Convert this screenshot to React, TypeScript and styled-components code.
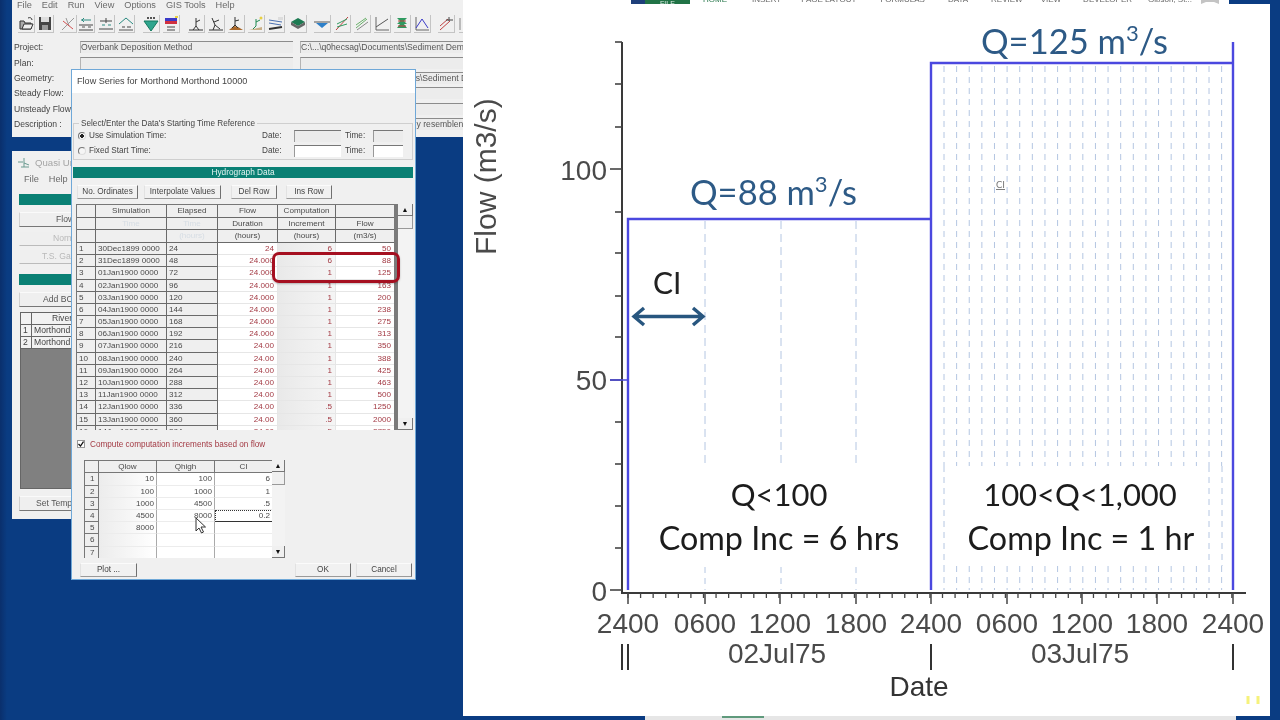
import React from 'react';
import styled, { createGlobalStyle } from 'styled-components';

const Global = createGlobalStyle`
  html, body { margin: 0; padding: 0; background: #0a3c82; }
  * { box-sizing: border-box; }
`;

const Desktop = styled.div`
  position: relative;
  width: 1280px;
  height: 720px;
  overflow: hidden;
  background: linear-gradient(90deg, #0a2f6c 0, #0a3c82 7px);
  font-family: "Liberation Sans", Arial, sans-serif;
  filter: blur(0.5px);
`;

/* ---------- HEC-RAS main window ---------- */
const MainWindow = styled.section`
  position: absolute;
  left: 12px;
  top: 0;
  width: 451px;
  height: 137px;
  background: #f0f0f0;
  color: #444;
  font-size: 8.6px;
  overflow: hidden;
`;
const MenuBar = styled.nav<{ $gap?: number }>`
  display: flex;
  gap: ${p => p.$gap ?? 10}px;
  padding-left: 5px;
  height: 11px;
  font-size: 9.2px;
  line-height: 10px;
  color: #6a6a6a;
`;
const Toolbar = styled.div`
  display: flex;
  align-items: center;
  height: 18px;
  margin-top: 4px;
  padding-left: 6px;
`;
const ToolBtn = styled.span<{ $ml: number }>`
  display: block;
  width: 17px;
  height: 18px;
  margin-left: ${p => p.$ml}px;
  border-right: 1px solid #c4c4c4;
  border-bottom: 1px solid #c4c4c4;
  svg { display: block; }
`;
const FormGrid = styled.div`
  display: grid;
  grid-template-columns: 68px 213px 7px 163px;
  grid-auto-rows: 15.4px;
  margin-top: 6.5px;
`;
const FormLabel = styled.div`
  padding-left: 2px;
  align-self: center;
  white-space: nowrap;
  color: #444;
`;
const Field = styled.div<{ $wide?: boolean; $indent?: number }>`
  grid-column: ${p => (p.$wide ? '2 / span 3' : 'auto')};
  height: 12px;
  align-self: center;
  background: #ececec;
  border-top: 1px solid #8c8c8c;
  border-left: 1px solid #b4b4b4;
  line-height: 10px;
  white-space: nowrap;
  overflow: hidden;
  padding-left: ${p => p.$indent ?? 0}px;
  color: #555;
`;
const Gap = styled.div``;

/* ---------- Quasi Unsteady window ---------- */
const QuasiWindow = styled.section`
  position: absolute;
  left: 12px;
  top: 151px;
  width: 380px;
  height: 368px;
  background: #f0f0f0;
  padding: 0 7px;
  font-size: 8.6px;
  color: #555;
`;
const QuasiTitle = styled.header`
  display: flex;
  align-items: center;
  gap: 5px;
  height: 23px;
  margin-left: -1px;
  font-size: 9.6px;
  color: #a5a5a5;
  svg { display: block; }
`;
const TealBar = styled.div<{ $h?: number; $mt?: number }>`
  height: ${p => p.$h ?? 11}px;
  margin-top: ${p => p.$mt ?? 0}px;
  background: #0a8074;
  color: #e4f4f2;
  font-size: 8.3px;
  line-height: 11px;
  text-align: center;
`;
const QuasiButton = styled.div<{ $pad: number; $dim?: boolean; $mt: number }>`
  height: 15px;
  margin-top: ${p => p.$mt}px;
  padding-left: ${p => p.$pad}px;
  background: #efefef;
  border-top: 1px solid ${p => (p.$dim ? '#f0f0f0' : '#fafafa')};
  border-left: 1px solid ${p => (p.$dim ? '#f0f0f0' : '#d0d0d0')};
  border-bottom: 1.5px solid ${p => (p.$dim ? '#bbb' : '#777')};
  line-height: 12px;
  white-space: nowrap;
  color: ${p => (p.$dim ? '#b9b9b9' : '#555')};
`;
const RiverTable = styled.div`
  margin-top: 5px;
  margin-left: 1px;
  height: 177px;
  background: #808080;
  border: 1px solid #666;
  border-right: 0;
`;
const RiverRow = styled.div<{ $head?: boolean }>`
  display: grid;
  grid-template-columns: 11px 1fr;
  height: 12px;
  line-height: 11px;
  background: #f2f2f2;
  color: #444;
  border-bottom: 1px solid #666;
  span { border-right: 1px solid #666; padding-left: 2px; }
  b { font-weight: normal; padding-left: ${p => (p.$head ? 20 : 2)}px; }
`;

/* ---------- Dialog ---------- */
const Dialog = styled.section`
  position: absolute;
  left: 71px;
  top: 69px;
  width: 345px;
  height: 511px;
  border: 1px solid #6fa8d8;
  background: #f0f0f0;
  color: #444;
  font-size: 8.2px;
  display: flex;
  flex-direction: column;
  overflow: hidden;
`;
const DialogTitle = styled.header`
  flex: none;
  height: 23px;
  background: #fff;
  padding-left: 5px;
  line-height: 23px;
  font-size: 9.1px;
  color: #444;
`;
const DialogBody = styled.div`
  padding: 0 2px 0 1px;
`;
const GroupBox = styled.div`
  position: relative;
  margin-top: 30px;
  height: 37px;
  border: 1px solid #cfcfcf;
  padding: 4px 0 0 4px;
`;
const Legend = styled.span`
  position: absolute;
  left: 5px;
  top: -6px;
  padding: 0 2px;
  background: #f0f0f0;
  line-height: 11px;
`;
const TimeRow = styled.div`
  display: grid;
  grid-template-columns: 11px 173px 32px 47px 32px 30px;
  height: 15px;
  align-items: center;
  span { white-space: nowrap; }
`;
const Radio = styled.i<{ $on?: boolean }>`
  display: block;
  width: 8px;
  height: 8px;
  border-radius: 50%;
  background: ${p => (p.$on ? 'radial-gradient(circle, #222 0 1.6px, #f5f5f5 2px)' : '#f5f5f5')};
  border: 1px solid;
  border-color: #777 #ddd #ddd #777;
`;
const TimeLabel = styled.span`
  padding-left: 4px;
`;
const TimeField = styled.div<{ $white?: boolean }>`
  height: 12px;
  background: ${p => (p.$white ? '#fff' : '#ececec')};
  border-top: 1px solid #777;
  border-left: 1px solid #999;
`;
const BtnRow = styled.div`
  display: flex;
  margin-top: 7px;
  padding-left: 4px;
`;
const Bevel = styled.div<{ $w: number; $ml?: number }>`
  width: ${p => p.$w}px;
  height: 14px;
  margin-left: ${p => p.$ml ?? 0}px;
  background: #f1f1f1;
  border-top: 1px solid #fbfbfb;
  border-left: 1px solid #e2e2e2;
  border-right: 1.5px solid #707070;
  border-bottom: 1.5px solid #9a9a9a;
  text-align: center;
  line-height: 12px;
  white-space: nowrap;
  color: #444;
`;
const TableArea = styled.div`
  display: flex;
  height: 226px;
  margin-top: 5px;
  margin-left: 3px;
  overflow: hidden;
`;
const DataGrid = styled.div`
  flex: none;
  display: grid;
  width: 318px;
  grid-template-columns: 19px 71px 51px 60px 58px 59px;
  grid-template-rows: repeat(3, 12.67px);
  grid-auto-rows: 12.2px;
  align-content: start;
  height: 226px;
  overflow: hidden;
  border-left: 1px solid #777;
  border-top: 1px solid #777;
  font-size: 8.1px;
`;
type CellKind = 'head' | 'faded' | 'idx' | 'text' | 'dur' | 'inc' | 'flow';
const Cell = styled.div<{ $k: CellKind }>`
  line-height: 11px;
  white-space: nowrap;
  overflow: hidden;
  text-align: ${p => (p.$k === 'head' || p.$k === 'faded' ? 'center' : p.$k === 'idx' || p.$k === 'text' ? 'left' : 'right')};
  padding: ${p => (p.$k === 'idx' || p.$k === 'text' ? '0 0 0 2px' : p.$k === 'head' || p.$k === 'faded' ? '0' : '0 3px 0 0')};
  background: ${p =>
    p.$k === 'dur' || p.$k === 'flow' ? '#fff' : p.$k === 'inc' ? 'linear-gradient(90deg,#e9e9e9,#f5f5f5)' : '#efefef'};
  color: ${p =>
    p.$k === 'faded' ? '#d6dde4' : p.$k === 'dur' || p.$k === 'inc' || p.$k === 'flow' ? '#a33a44' : '#4a4a4a'};
  border-right: 1px solid ${p => (p.$k === 'dur' || p.$k === 'inc' || p.$k === 'flow' ? '#e6e6e6' : '#6a6a6a')};
  border-bottom: 1px solid ${p => (p.$k === 'dur' || p.$k === 'inc' || p.$k === 'flow' ? '#e6e6e6' : '#6a6a6a')};
`;
const DarkEdge = styled.div`
  flex: none;
  width: 4px;
  background: #7a7a7a;
`;
const Scroll = styled.div<{ $w: number; $thumb: number }>`
  flex: none;
  width: ${p => p.$w}px;
  display: flex;
  flex-direction: column;
  background: #f3f3f3;
  span {
    flex: none;
    display: flex;
    align-items: center;
    justify-content: center;
    height: 12px;
    background: #f0f0f0;
    border-right: 1px solid #777;
    border-bottom: 1px solid #777;
    font-size: 7px;
    color: #111;
  }
  em {
    flex: none;
    display: block;
    height: ${p => p.$thumb}px;
    border-right: 1px solid #999;
    border-bottom: 1px solid #999;
    background: #f0f0f0;
  }
  u { flex: 1; }
`;
const CheckRow = styled.div`
  display: flex;
  align-items: center;
  gap: 5px;
  height: 12px;
  margin-top: 8px;
  padding-left: 4px;
  color: #a33a44;
`;
const CheckBox = styled.span`
  display: flex;
  align-items: center;
  justify-content: center;
  width: 8px;
  height: 8px;
  background: #fff;
  border: 1px solid #999;
  color: #111;
  svg { display: block; }
`;
const FlowTableArea = styled.div`
  display: flex;
  height: 98px;
  margin-top: 10px;
  margin-left: 11px;
  overflow: hidden;
`;
const FlowGrid = styled.div`
  flex: none;
  display: grid;
  width: 188px;
  grid-template-columns: 14px 58px 58px 58px;
  grid-template-rows: 12.4px;
  grid-auto-rows: 12.2px;
  align-content: start;
  font-size: 8.1px;
  border-left: 1px solid #777;
  border-top: 1px solid #777;
`;
type FlowKind = 'head' | 'idx' | 'num' | 'numDim' | 'focus';
const FlowCell = styled.div<{ $k: FlowKind }>`
  line-height: 11px;
  white-space: nowrap;
  text-align: ${p => (p.$k === 'head' ? 'center' : p.$k === 'idx' ? 'left' : 'right')};
  padding: ${p => (p.$k === 'idx' ? '0 0 0 5px' : p.$k === 'head' ? '0' : '0 2px 0 0')};
  color: #4a4a4a;
  background: ${p => (p.$k === 'head' || p.$k === 'idx' ? '#efefef' : p.$k === 'numDim' ? 'linear-gradient(90deg,#ececec,#fff)' : '#fff')};
  border-right: 1px solid ${p => (p.$k === 'head' || p.$k === 'idx' ? '#777' : p.$k === 'focus' ? '#333' : '#aaa')};
  border-bottom: 1px solid ${p => (p.$k === 'head' || p.$k === 'idx' ? '#777' : p.$k === 'focus' ? '#333' : '#ececec')};
  outline: ${p => (p.$k === 'focus' ? '1px dotted #333' : 'none')};
  outline-offset: -1px;
`;
const DialogFooter = styled.div`
  display: flex;
  margin-top: 5px;
  padding: 0 1px 0 7px;
`;
const FooterSpacer = styled.div`
  flex: 1;
`;
const RedHighlight = styled.div`
  position: absolute;
  left: 200px;
  top: 182px;
  width: 128px;
  height: 31px;
  border: 3.5px solid #a50f20;
  border-radius: 7px;
  box-shadow: 0 1px 2px rgba(0, 0, 0, 0.25);
`;
const Pointer = styled.svg`
  position: absolute;
  left: 195px;
  top: 517px;
`;

/* ---------- Slide ---------- */
const Slide = styled.section`
  position: absolute;
  left: 463px;
  top: 0;
  width: 807px;
  height: 716px;
  background: #fff;
  display: flex;
  flex-direction: column;
`;
const Ribbon = styled.div`
  flex: none;
  display: flex;
  align-items: flex-end;
  height: 4px;
  overflow: hidden;
  font-size: 8px;
  line-height: 8px;
  color: #666;
  white-space: nowrap;
`;
const RibbonLogo = styled.div<{ $w: number; $ml: number; $c: string }>`
  flex: none;
  width: ${p => p.$w}px;
  height: 4px;
  margin-left: ${p => p.$ml}px;
  background: ${p => p.$c};
  color: #dfeee6;
  text-align: center;
  font-size: 7px;
`;
const RibbonTab = styled.span<{ $x: number; $green?: boolean }>`
  flex: none;
  margin-left: ${p => p.$x}px;
  color: ${p => (p.$green ? '#217346' : '#666')};
`;
const RibbonIcon = styled.svg`
  flex: none;
  display: block;
  margin-left: 9px;
`;
const RibbonRest = styled.div`
  flex: 1;
  align-self: stretch;
  background: #0a3c82;
  margin-left: 10px;
`;
const ChartSvg = styled.svg`
  display: block;
  flex: 1;
`;
const StatusStrip = styled.div`
  position: absolute;
  left: 645px;
  top: 716px;
  width: 591px;
  height: 4px;
  background: #e6e6e6;
`;
const StatusTab = styled.div`
  width: 42px;
  height: 2px;
  margin-left: 77px;
  background: #5f9a7c;
`;

const sansText = { fontFamily: '"Liberation Sans", Arial, sans-serif' };
const lato = { fontFamily: 'Lato, "Liberation Sans", sans-serif' };

const dayLabelXs = [628, 705, 780, 856, 931, 1007, 1082, 1157, 1233];
const hourLabels = ['2400', '0600', '1200', '1800', '2400', '0600', '1200', '1800', '2400'];
const blue = '#4b48df';
const dash = '#b4c6e2';

const Chart: React.FC = () => {
  const minorY = [42, 84, 127, 212, 253, 296, 337, 422, 464, 506, 548];
  const minorX = Array.from({ length: 49 }, (_, i) => 628 + i * 12.58);
  const dense = Array.from({ length: 23 }, (_, i) => 944 + i * 12.62);
  const edge = [944, 1209, 1222];
  return (
    <ChartSvg viewBox="463 4 807 712" width="807" height="712">
      {/* axes */}
      <line x1="622" y1="42" x2="622" y2="594" stroke="#3a3a3a" strokeWidth="2" />
      <line x1="621" y1="593" x2="1246" y2="593" stroke="#3a3a3a" strokeWidth="2" />
      {minorY.map(y => (
        <line key={y} x1="615" y1={y} x2="622" y2={y} stroke="#444" strokeWidth="1.6" />
      ))}
      {[169, 380, 590].map(y => (
        <line key={y} x1="610" y1={y} x2="622" y2={y} stroke="#444" strokeWidth="1.6" />
      ))}
      {minorX.map(x => (
        <line key={x} x1={x} y1="593" x2={x} y2="598" stroke="#444" strokeWidth="1.3" />
      ))}
      {dayLabelXs.map((x, i) => (
        <line key={i} x1={x} y1="593" x2={x} y2="604" stroke="#444" strokeWidth="1.5" />
      ))}
      {/* dashed computation increments */}
      {[705, 781, 856].map(x => (
        <g key={x}>
          <line x1={x} y1="221" x2={x} y2="466" stroke={dash} strokeWidth="1" strokeDasharray="8 5" />
          <line x1={x} y1="567" x2={x} y2="590" stroke={dash} strokeWidth="1" strokeDasharray="6 5" />
        </g>
      ))}
      {dense.map(x => (
        <g key={x}>
          <line x1={x} y1="66" x2={x} y2="466" stroke={dash} strokeWidth="1" strokeDasharray="6 5" />
          <line x1={x} y1="566" x2={x} y2="590" stroke={dash} strokeWidth="1" strokeDasharray="6 5" />
        </g>
      ))}
      {edge.map(x => (
        <line key={x} x1={x} y1="466" x2={x} y2="566" stroke={dash} strokeWidth="1" strokeDasharray="6 5" />
      ))}
      {/* hydrograph */}
      <path
        d="M628 590V219H931V63H1233M931 590V219M1233 42V590"
        fill="none"
        stroke={blue}
        strokeWidth="2.4"
      />
      <line x1="610" y1="380" x2="628" y2="380" stroke={blue} strokeWidth="1.5" />
      {/* CI arrow */}
      <path
        d="M634 316.5H703M644 308l-10 8.5 10 8.5M693 308l10 8.5-10 8.5"
        fill="none"
        stroke="#28567f"
        strokeWidth="3.4"
      />
      <g style={lato} fill="#2d5a86" fontSize="34.5">
        <text x="981" y="54">
          Q=125 m<tspan fontSize="22" dy="-13">3</tspan>
          <tspan dy="13">/s</tspan>
        </text>
        <text x="690" y="205">
          Q=88 m<tspan fontSize="22" dy="-13">3</tspan>
          <tspan dy="13">/s</tspan>
        </text>
      </g>
      <text x="653" y="294" style={lato} fontSize="30" fill="#222">CI</text>
      <text x="996" y="188" style={lato} fontSize="9.5" fill="#777" textDecoration="underline">CI</text>
      <g style={lato} fontSize="31" fill="#1c1c1c" textAnchor="middle">
        <text x="779" y="506">Q&lt;100</text>
        <text x="779" y="550" fontSize="32.3">Comp Inc = 6 hrs</text>
        <text x="1080" y="506">100&lt;Q&lt;1,000</text>
        <text x="1081" y="550" fontSize="32.3">Comp Inc = 1 hr</text>
      </g>
      {/* axis labels */}
      <g style={sansText} fill="#4a4a4a" fontSize="28">
        <text x="607" y="180" textAnchor="end">100</text>
        <text x="607" y="390" textAnchor="end">50</text>
        <text x="607" y="601" textAnchor="end">0</text>
        {hourLabels.map((t, i) => (
          <text key={i} x={dayLabelXs[i]} y="633" textAnchor="middle">{t}</text>
        ))}
        <text x="777" y="663" textAnchor="middle">02Jul75</text>
        <text x="1080" y="663" textAnchor="middle">03Jul75</text>
        <text x="919" y="696" textAnchor="middle" fill="#333">Date</text>
        <text transform="translate(496 255) rotate(-90)" fontSize="30">Flow (m3/s)</text>
      </g>
      {[622, 628, 931, 1233].map(x => (
        <line key={x} x1={x} y1="644" x2={x} y2="670" stroke="#333" strokeWidth="2" />
      ))}
      {[1248, 1258].map(x => (
        <rect key={x} x={x - 1.5} y="696" width="3" height="8" fill="#f6f27c" />
      ))}
    </ChartSvg>
  );
};

/* ---------- Toolbar icons ---------- */
const S = (p: { children: React.ReactNode }) => (
  <svg width="16" height="17" viewBox="0 0 16 17" fill="none">{p.children}</svg>
);
const icons: { ml: number; el: React.ReactNode }[] = [
  { ml: 0, el: <S><path d="M2 6h4l1 2h6v6H2z" fill="#aaa" stroke="#333" /><path d="M4 14l2-5h9l-2 5z" fill="#eee" stroke="#333" /><path d="M10 3c2-1 4 0 4 2" stroke="#333" /></S> },
  { ml: 2, el: <S><rect x="2" y="2" width="12" height="13" fill="#444" /><rect x="4" y="2" width="8" height="5" fill="#ddd" /><rect x="5" y="10" width="6" height="5" fill="#999" /></S> },
  { ml: 6, el: <S><path d="M2 15L14 3M6 3l3 8" stroke="#999" /><path d="M3 6l10 8" stroke="#d05050" /></S> },
  { ml: 1, el: <S><path d="M3 5h10M6 3l-2 2 2 2" stroke="#2a8a80" /><path d="M1 10h14M1 15h14" stroke="#444" /><path d="M4 12h3M10 12h3" stroke="#555" /></S> },
  { ml: 3, el: <S><path d="M2 6h12M8 3v5" stroke="#444" /><path d="M1 14h14" stroke="#444" /><path d="M4 10h3M10 10h3" stroke="#2a8a80" /></S> },
  { ml: 3, el: <S><path d="M1 9l7-6 7 6" stroke="#2a8a80" /><path d="M1 15h14" stroke="#555" /><path d="M4 12h3M9 12h4" stroke="#444" /></S> },
  { ml: 8, el: <S><path d="M1 6h14L8 16z" fill="#2fa58e" stroke="#137a5e" /><path d="M4 3h8" stroke="#555" strokeWidth="2" strokeDasharray="2 1" /></S> },
  { ml: 3, el: <S><rect x="2" y="3" width="12" height="3" fill="#3a3ac8" /><rect x="2" y="6" width="12" height="3" fill="#d03040" /><rect x="12" y="1" width="3" height="2" fill="#e8d040" /><path d="M4 12h8M4 15h8" stroke="#444" /></S> },
  { ml: 8, el: <S><path d="M1 15h14" stroke="#333" /><path d="M8 3v8l-3 4M8 7l4-2M8 11l3 4" stroke="#333" /></S> },
  { ml: 3, el: <S><path d="M1 15h14" stroke="#333" /><path d="M4 3l3 7-2 5M6 7l5-2M7 10l5 4" stroke="#333" /></S> },
  { ml: 3, el: <S><path d="M1 15l5-4 4 1 5 3z" fill="#a9682a" /><path d="M7 2v8l-3 3M7 6l4-1M7 10l3 3" stroke="#333" /></S> },
  { ml: 3, el: <S><path d="M1 15l13-3v3z" fill="#c9b088" /><path d="M8 4v7l-3 3M8 7l4-2" stroke="#1f8a50" /><circle cx="13" cy="3" r="1.5" fill="#e8d040" /></S> },
  { ml: 3, el: <S><path d="M1 5l13 2M1 8l12 2" stroke="#4a6fb0" /><path d="M1 14l13-2" stroke="#333" strokeWidth="2" /><path d="M10 2h5v3h-5z" fill="#ddd" /></S> },
  { ml: 5, el: <S><path d="M1 7l7-4 7 4-7 4z" fill="#1d7a52" /><path d="M1 7l7 4 7-4v3l-7 4-7-4z" fill="#666" /></S> },
  { ml: 7, el: <S><path d="M2 8h12L8 13z" fill="#2c7fc9" /><path d="M0 7h16" stroke="#555" /></S> },
  { ml: 3, el: <S><path d="M2 15L14 2" stroke="#c04040" /><path d="M3 9l10-5M3 12l10-3" stroke="#2f9a60" /></S> },
  { ml: 3, el: <S><path d="M2 13L13 4M2 10L12 3" stroke="#6ab06a" /><path d="M3 15L14 7" stroke="#888" /></S> },
  { ml: 3, el: <S><path d="M2 2v13h13" stroke="#666" /><path d="M2 12L14 4" stroke="#555" /></S> },
  { ml: 3, el: <S><path d="M3 3h10l-3 3 3 3-3 0 3 4H3l3-4-3 0 3-3z" fill="#2f9a60" /><path d="M4 6h8M4 11h8" stroke="#c04040" /></S> },
  { ml: 3, el: <S><path d="M2 2v13h13" stroke="#666" /><path d="M2 13l6-9 6 9" stroke="#3a3ac8" /></S> },
  { ml: 7, el: <S><path d="M2 15L12 6M2 11l8-7" stroke="#c04040" /><path d="M8 5h7M11 2v4" stroke="#444" /></S> },
  { ml: 4, el: <S><path d="M0 3h2v12H0z" fill="#bbb" /></S> },
];

/* ---------- Table data ---------- */
const sims = [
  '30Dec1899 0000', '31Dec1899 0000', '01Jan1900 0000', '02Jan1900 0000', '03Jan1900 0000', '04Jan1900 0000',
  '05Jan1900 0000', '06Jan1900 0000', '07Jan1900 0000', '08Jan1900 0000', '09Jan1900 0000', '10Jan1900 0000',
  '11Jan1900 0000', '12Jan1900 0000', '13Jan1900 0000', '14Jan1900 0000',
];
const durations = ['24', '24.000', '24.000', '24.000', '24.000', '24.000', '24.000', '24.000', '24.00', '24.00', '24.00', '24.00', '24.00', '24.00', '24.00', '24.00'];
const incs = ['6', '6', '1', '1', '1', '1', '1', '1', '1', '1', '1', '1', '1', '.5', '.5', '.5'];
const flows = ['50', '88', '125', '163', '200', '238', '275', '313', '350', '388', '425', '463', '500', '1250', '2000', '2750'];
const heads: [CellKind, string][] = [
  ['head', ''], ['head', 'Simulation'], ['head', 'Elapsed'], ['head', 'Flow'], ['head', 'Computation'], ['head', ''],
  ['head', ''], ['faded', 'Time'], ['faded', 'Time'], ['head', 'Duration'], ['head', 'Increment'], ['head', 'Flow'],
  ['head', ''], ['head', ''], ['faded', '(hours)'], ['head', '(hours)'], ['head', '(hours)'], ['head', '(m3/s)'],
];
const qRows: [string, string, string][] = [
  ['10', '100', '6'], ['100', '1000', '1'], ['1000', '4500', '.5'], ['4500', '8000', '0.2'], ['8000', '', ''], ['', '', ''], ['', '', ''],
];

const App: React.FC = () => (
  <>
    <Global />
    <Desktop>
      <MainWindow>
        <MenuBar>
          {['File', 'Edit', 'Run', 'View', 'Options', 'GIS Tools', 'Help'].map(m => <span key={m}>{m}</span>)}
        </MenuBar>
        <Toolbar>
          {icons.map((ic, i) => <ToolBtn key={i} $ml={ic.ml}>{ic.el}</ToolBtn>)}
        </Toolbar>
        <FormGrid>
          <FormLabel>Project:</FormLabel>
          <Field>Overbank Deposition Method</Field><Gap />
          <Field>{'C:\\...\\q0hecsag\\Documents\\Sediment Demo'}</Field>
          <FormLabel>Plan:</FormLabel>
          <Field /><Gap /><Field />
          <FormLabel>Geometry:</FormLabel>
          <Field>Overbank Deposition</Field><Gap />
          <Field>{'C:\\Users\\q0hecsag\\Documents\\Sediment Demo'}</Field>
          <FormLabel>Steady Flow:</FormLabel>
          <Field /><Gap /><Field />
          <FormLabel>Unsteady Flow</FormLabel>
          <Field /><Gap /><Field />
          <FormLabel>Description :</FormLabel>
          <Field $wide $indent={326}>any resemblence to a real river</Field>
        </FormGrid>
      </MainWindow>

      <QuasiWindow>
        <QuasiTitle>
          <svg width="12" height="12" viewBox="0 0 12 12" fill="none">
            <path d="M0 5h5M6 1v9M6 6l5 2M3 10h8" stroke="#6a9a90" />
          </svg>
          Quasi Unsteady Flow Editor
        </QuasiTitle>
        <MenuBar $gap={10}>
          <span>File</span><span>Help</span>
        </MenuBar>
        <TealBar $mt={9} />
        <QuasiButton $pad={36} $mt={7}>Flow Series</QuasiButton>
        <QuasiButton $pad={33} $mt={4} $dim>Normal Depth</QuasiButton>
        <QuasiButton $pad={22} $mt={3} $dim>T.S. Gate Openings</QuasiButton>
        <TealBar $mt={10} />
        <QuasiButton $pad={23} $mt={7}>Add BC Location</QuasiButton>
        <RiverTable>
          <RiverRow $head><span /><b>River</b></RiverRow>
          <RiverRow><span>1</span><b>Morthond</b></RiverRow>
          <RiverRow><span>2</span><b>Morthond</b></RiverRow>
        </RiverTable>
        <QuasiButton $pad={16} $mt={7}>Set Temperature</QuasiButton>
      </QuasiWindow>

      <Dialog>
        <DialogTitle>Flow Series for Morthond Morthond 10000</DialogTitle>
        <DialogBody>
          <GroupBox>
            <Legend>Select/Enter the Data's Starting Time Reference</Legend>
            <TimeRow>
              <Radio $on /><span>Use Simulation Time:</span><span>Date:</span><TimeField />
              <TimeLabel>Time:</TimeLabel><TimeField />
            </TimeRow>
            <TimeRow>
              <Radio /><span>Fixed Start Time:</span><span>Date:</span><TimeField $white />
              <TimeLabel>Time:</TimeLabel><TimeField $white />
            </TimeRow>
          </GroupBox>
          <TealBar $mt={7}>Hydrograph Data</TealBar>
          <BtnRow>
            <Bevel $w={61}>No. Ordinates</Bevel>
            <Bevel $w={77} $ml={6}>Interpolate Values</Bevel>
            <Bevel $w={46} $ml={10}>Del Row</Bevel>
            <Bevel $w={46} $ml={9}>Ins Row</Bevel>
          </BtnRow>
          <TableArea>
            <DataGrid>
              {heads.map(([k, t], i) => <Cell key={i} $k={k}>{t}</Cell>)}
              {sims.map((s, i) => (
                <React.Fragment key={s}>
                  <Cell $k="idx">{i + 1}</Cell>
                  <Cell $k="text">{s}</Cell>
                  <Cell $k="text">{(i + 1) * 24}</Cell>
                  <Cell $k="dur">{durations[i]}</Cell>
                  <Cell $k="inc">{incs[i]}</Cell>
                  <Cell $k="flow">{flows[i]}</Cell>
                </React.Fragment>
              ))}
            </DataGrid>
            <DarkEdge />
            <Scroll $w={15} $thumb={13}>
              <span>▲</span><em /><u /><span>▼</span>
            </Scroll>
          </TableArea>
          <CheckRow>
            <CheckBox>
              <svg width="6" height="6" viewBox="0 0 6 6" fill="none"><path d="M0.5 3l2 2 3-4.5" stroke="#111" strokeWidth="1.3" /></svg>
            </CheckBox>
            Compute computation increments based on flow
          </CheckRow>
          <FlowTableArea>
            <FlowGrid>
              <FlowCell $k="head" />
              <FlowCell $k="head">Qlow</FlowCell>
              <FlowCell $k="head">Qhigh</FlowCell>
              <FlowCell $k="head">CI</FlowCell>
              {qRows.map((r, i) => (
                <React.Fragment key={i}>
                  <FlowCell $k="idx">{i + 1}</FlowCell>
                  <FlowCell $k="numDim">{r[0]}</FlowCell>
                  <FlowCell $k="num">{r[1]}</FlowCell>
                  <FlowCell $k={i === 3 ? 'focus' : 'num'}>{r[2]}</FlowCell>
                </React.Fragment>
              ))}
            </FlowGrid>
            <Scroll $w={13} $thumb={13}>
              <span>▲</span><em /><u /><span>▼</span>
            </Scroll>
          </FlowTableArea>
          <DialogFooter>
            <Bevel $w={57}>Plot ...</Bevel>
            <FooterSpacer />
            <Bevel $w={56}>OK</Bevel>
            <Bevel $w={56} $ml={5}>Cancel</Bevel>
          </DialogFooter>
        </DialogBody>
        <RedHighlight />
      </Dialog>

      <Pointer width="12" height="17" viewBox="0 0 12 17">
        <path d="M1 1v13l3-3 2.5 5 2-1-2.5-5h4.5z" fill="#fff" stroke="#333" strokeWidth="1" />
      </Pointer>

      <Slide>
        <Ribbon>
          <RibbonLogo $w={14} $ml={168} $c="#1e3f7a" />
          <RibbonLogo $w={45} $ml={0} $c="#217346">FILE</RibbonLogo>
          <RibbonTab $x={13} $green>HOME</RibbonTab>
          <RibbonTab $x={25}>INSERT</RibbonTab>
          <RibbonTab $x={20}>PAGE LAYOUT</RibbonTab>
          <RibbonTab $x={24}>FORMULAS</RibbonTab>
          <RibbonTab $x={23}>DATA</RibbonTab>
          <RibbonTab $x={23}>REVIEW</RibbonTab>
          <RibbonTab $x={18}>VIEW</RibbonTab>
          <RibbonTab $x={22}>DEVELOPER</RibbonTab>
          <RibbonTab $x={16}>Gibson, St...</RibbonTab>
          <RibbonIcon width="18" height="4" viewBox="0 0 18 4">
            <path d="M0 0h18v4l-5-2H5L0 4z" fill="#c4c4c4" />
          </RibbonIcon>
          <RibbonRest />
        </Ribbon>
        <Chart />
      </Slide>
      <StatusStrip><StatusTab /></StatusStrip>
    </Desktop>
  </>
);

export default App;
